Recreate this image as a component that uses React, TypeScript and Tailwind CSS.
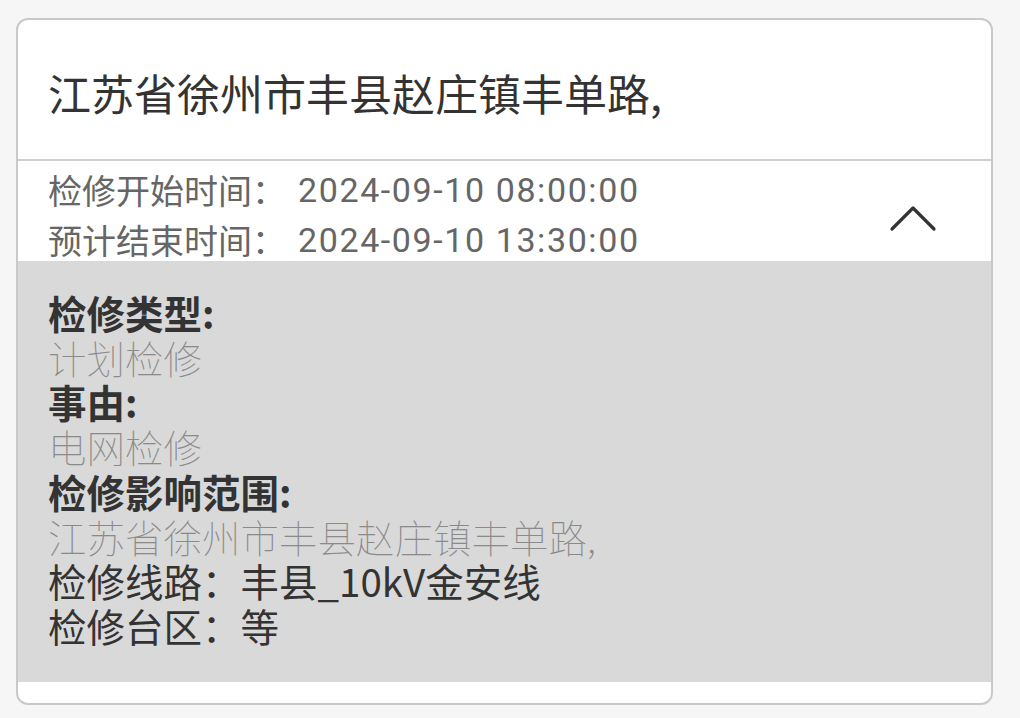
const cjk = "font-['Noto_Sans_CJK_SC','Noto_Sans',sans-serif]";

const address = "江苏省徐州市丰县赵庄镇丰单路,";

export default function App() {
  return (
    <div className={`min-h-[718px] bg-[#f6f6f6] pt-[18px] ${cjk}`}>
      <div className="ml-[16px] w-[977px] overflow-hidden rounded-[12px] border-2 border-[#c9c9c9] bg-white">
        {/* title */}
        <div className="flex h-[141px] items-center border-b-2 border-[#cfcfcf] px-[30px] pt-[5px]">
          <h1 className="text-[43px] leading-none text-[#333]">{address}</h1>
        </div>

        {/* time range */}
        <div className="flex h-[100px] items-center justify-between pl-[30px] pr-[54px] pt-[8px]">
          <div className="flex flex-col text-[34px] leading-[50px] text-[#666]">
            <div className="flex">
              <span className="w-[250px]">检修开始时间：</span>
              <span className="font-['Roboto',sans-serif] text-[34px] tracking-[1.6px]">2024-09-10 08:00:00</span>
            </div>
            <div className="flex">
              <span className="w-[250px]">预计结束时间：</span>
              <span className="font-['Roboto',sans-serif] text-[34px] tracking-[1.6px]">2024-09-10 13:30:00</span>
            </div>
          </div>
          <svg width="48" height="28" viewBox="0 0 48 28" fill="none" className="mt-[6px] text-[#333]">
            <polyline
              points="3,25 24,4 45,25"
              stroke="currentColor"
              strokeWidth="3.2"
              strokeLinecap="round"
              strokeLinejoin="round"
            />
          </svg>
        </div>

        {/* details */}
        <div className="bg-[#d9d9d9] px-[30px] pb-[34px] pt-[29px] text-[38.5px] leading-[44.7px]">
          <div className="font-bold text-[#333]">检修类型:</div>
          <div className="font-thin text-[#8a8a8a]">计划检修</div>
          <div className="font-bold text-[#333]">事由:</div>
          <div className="font-thin text-[#8a8a8a]">电网检修</div>
          <div className="font-bold text-[#333]">检修影响范围:</div>
          <div className="font-thin text-[#8a8a8a]">{address}</div>
          <div className="text-[#333]">检修线路：丰县_10kV金安线</div>
          <div className="text-[#333]">检修台区：等</div>
        </div>
        <div className="h-[21px]" />
      </div>
    </div>
  );
}
